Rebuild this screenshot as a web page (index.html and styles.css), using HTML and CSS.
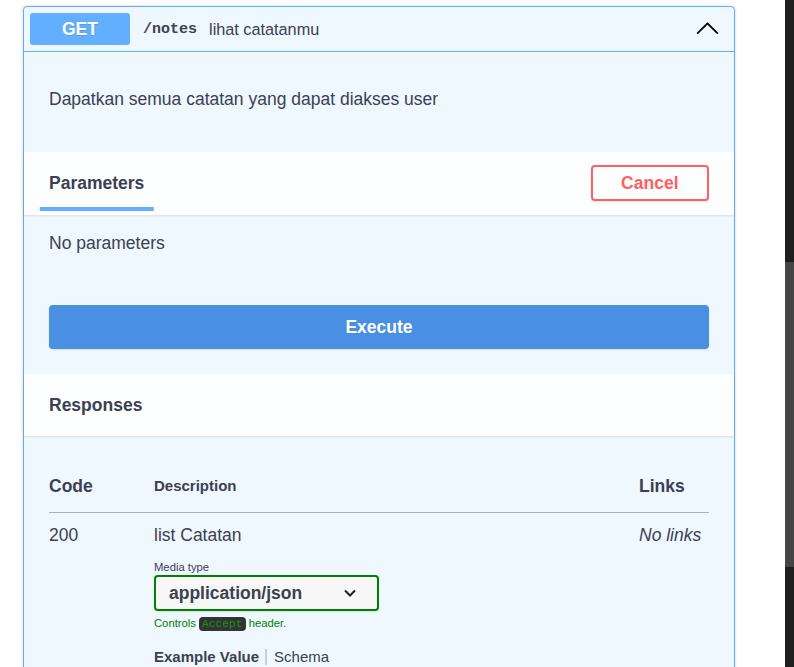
FILE: index.html
```html
<!DOCTYPE html>
<html lang="id">
<head>
<meta charset="utf-8">
<title>GET /notes</title>
<link rel="stylesheet" href="styles.css">
</head>
<body>
<div class="page">
  <main class="content">
    <section class="opblock">
      <div class="summary">
        <span class="method">GET</span>
        <span class="path">/notes</span>
        <span class="summary-desc">lihat catatanmu</span>
        <svg class="arrow" width="25" height="25" viewBox="0 0 20 20" aria-hidden="true">
          <path d="M17.418 14.908c.272.268.709.268.979 0s.271-.701 0-.969l-7.908-7.83c-.27-.268-.707-.268-.979 0l-7.908 7.830c-.27.268-.27.701 0 .969.271.268.709.268.979 0L10 7.771l7.418 7.137z" fill="#000"/>
        </svg>
      </div>
      <div class="op-body">
        <div class="desc-wrapper">
          <p>Dapatkan semua catatan yang dapat diakses user</p>
        </div>
        <div class="section-header">
          <h4 class="tab-title"><span class="tab-label">Parameters</span></h4>
          <button class="btn-cancel" type="button">Cancel</button>
        </div>
        <div class="params-body">
          <p>No parameters</p>
        </div>
        <div class="execute-wrapper">
          <button class="btn-execute" type="button">Execute</button>
        </div>
        <div class="section-header">
          <h4 class="section-title">Responses</h4>
        </div>
        <div class="responses-inner">
          <table class="responses-table">
            <colgroup>
              <col class="col-code">
              <col class="col-desc">
              <col class="col-links">
            </colgroup>
            <thead>
              <tr>
                <td class="th-big">Code</td>
                <td class="th-small">Description</td>
                <td class="th-big">Links</td>
              </tr>
            </thead>
            <tbody>
              <tr>
                <td class="cell-code">200</td>
                <td class="cell-desc">
                  <div class="resp-desc">list Catatan</div>
                  <div class="media-label">Media type</div>
                  <div class="media-select">
                    <span class="media-value">application/json</span>
                    <svg class="select-caret" width="14" height="10" viewBox="0 0 14 10" aria-hidden="true">
                      <polyline points="2,2.5 7,7.5 12,2.5" fill="none" stroke="#222" stroke-width="2"/>
                    </svg>
                  </div>
                  <div class="accept-msg">Controls <code class="accept-code">Accept</code> header.</div>
                  <div class="example-tabs">
                    <span class="tab-active">Example Value</span>
                    <span class="tab-sep"></span>
                    <span class="tab-inactive">Schema</span>
                  </div>
                </td>
                <td class="cell-links">No links</td>
              </tr>
            </tbody>
          </table>
        </div>
      </div>
    </section>
  </main>
  <div class="scrollbar"><div class="thumb"></div></div>
</div>
</body>
</html>
```

FILE: styles.css
```css
html, body {
  margin: 0;
  padding: 0;
  height: 100%;
  overflow: hidden;
}

body {
  background: #fff;
  color: #3b4151;
  font-family: "Liberation Sans", Arial, sans-serif;
}

.page {
  display: flex;
  height: 667px;
}

.content {
  flex: 1;
  padding: 6px 0 0 23px;
  overflow: hidden;
}

.opblock {
  width: 710px;
  border: 1px solid #61affe;
  border-radius: 4px;
  background: #eff7ff;
  box-shadow: 0 0 3px rgba(0, 0, 0, 0.19);
}

.summary {
  display: flex;
  align-items: center;
  padding: 6px;
  border-bottom: 1px solid #61affe;
  height: 32px;
}

.method {
  min-width: 100px;
  padding: 7.5px 0;
  line-height: 17px;
  background: #61affe;
  border-radius: 3px;
  color: #fff;
  font-size: 17.5px;
  font-weight: 700;
  text-align: center;
  text-shadow: 0 1px 0 rgba(0, 0, 0, 0.1);
}

.path {
  padding: 0 12px 0 13px;
  font-family: "Liberation Mono", "Courier New", monospace;
  font-size: 15px;
  font-weight: 700;
  color: #3b4151;
}

.summary-desc {
  flex: 1;
  font-size: 16.25px;
  color: #3b4151;
}

.arrow {
  margin: 0 8px 3px 0;
}

.desc-wrapper {
  padding: 33px 25px 39px;
}

.desc-wrapper p {
  margin: 0;
  font-size: 17.5px;
  line-height: 28px;
}

.section-header {
  display: flex;
  align-items: center;
  justify-content: space-between;
  box-sizing: border-box;
  min-height: 62.5px;
  padding: 10px 25px;
  background: rgba(255, 255, 255, 0.8);
  box-shadow: 0 1px 2px rgba(0, 0, 0, 0.1);
}

.tab-title,
.section-title {
  margin: 0;
  font-size: 17.5px;
  font-weight: 700;
  color: #3b4151;
  line-height: 20px;
}

.tab-label {
  position: relative;
  display: inline-block;
}

.tab-label::after {
  content: "";
  position: absolute;
  left: 50%;
  bottom: -18px;
  width: 120%;
  height: 4px;
  transform: translateX(-50%);
  background: #61affe;
}

.btn-cancel {
  padding: 6px 28.5px;
  border: 2px solid #ff6060;
  border-radius: 4px;
  background: transparent;
  color: #ff6060;
  font-family: "Liberation Sans", Arial, sans-serif;
  font-size: 17.5px;
  font-weight: 700;
  line-height: 20px;
  box-shadow: 0 1px 2px rgba(0, 0, 0, 0.1);
}

.params-body {
  padding: 14px 25px 23px;
}

.params-body p {
  margin: 0;
  font-size: 17.5px;
  line-height: 28px;
}

.execute-wrapper {
  padding: 25px;
}

.btn-execute {
  display: block;
  width: 100%;
  padding: 10px 0;
  border: 2px solid #4990e2;
  border-radius: 4px;
  background: #4990e2;
  color: #fff;
  font-family: "Liberation Sans", Arial, sans-serif;
  font-size: 17.5px;
  font-weight: 700;
  line-height: 20px;
  box-shadow: 0 1px 2px rgba(0, 0, 0, 0.1);
}

.responses-inner {
  padding: 25px 25px 60px;
}

.responses-table {
  width: 660px;
  table-layout: fixed;
  border-collapse: collapse;
}

.col-code { width: 105px; }
.col-links { width: 70px; }

.responses-table thead td {
  padding: 11.5px 0 13.5px;
  line-height: 26px;
  font-weight: 700;
  border-bottom: 1px solid #a9b0bc;
  vertical-align: middle;
}

.th-big { font-size: 17.5px; }
.th-small { font-size: 15px; }

.responses-table tbody td {
  padding: 11.5px 0 0;
  vertical-align: top;
  font-size: 17.5px;
  line-height: 20px;
}

.cell-links {
  font-style: italic;
}

.resp-desc {
  line-height: 20px;
}

.media-label {
  margin-top: 15px;
  font-size: 11.25px;
  line-height: 14px;
}

.media-select {
  display: flex;
  align-items: center;
  justify-content: space-between;
  box-sizing: border-box;
  width: 225px;
  height: 36px;
  margin-top: 1px;
  padding: 0 20px 0 13px;
  border: 2px solid #008000;
  border-radius: 4px;
  background: #f7f7f7;
  box-shadow: 0 1px 2px rgba(0, 0, 0, 0.1);
}

.media-value {
  font-size: 17.5px;
  font-weight: 700;
  color: #3b4151;
}

.accept-msg {
  margin-top: 5px;
  font-size: 11.25px;
  line-height: 14px;
  color: #008000;
}

.accept-code {
  display: inline-block;
  padding: 0 3px;
  border-radius: 4px;
  background: #333;
  color: #119611;
  font-family: "Liberation Mono", "Courier New", monospace;
  font-size: 11.25px;
  line-height: 14px;
}

.example-tabs {
  display: flex;
  align-items: center;
  margin-top: 17px;
  font-size: 15px;
  line-height: 18px;
}

.tab-active {
  font-weight: 700;
}

.tab-sep {
  width: 2px;
  height: 16px;
  margin: 0 7px 0 6px;
  background: #c9cdd3;
}

.scrollbar {
  width: 9px;
  background: #1f1f1f;
}

.thumb {
  height: 305px;
  margin-top: 262px;
  background: #454545;
}
```
